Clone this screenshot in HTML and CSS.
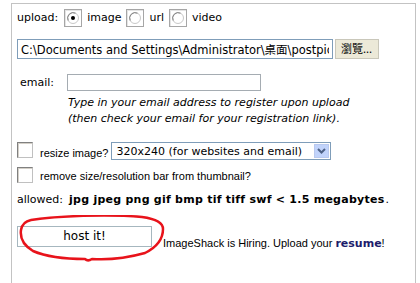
FILE: index.html
```html
<!DOCTYPE html>
<html>
<head>
<meta charset="utf-8">
<title>ImageShack upload</title>
<link rel="stylesheet" href="styles.css">
</head>
<body>
<div id="upload_box">
	<div class="row row_type">
		<span class="label">upload:</span>
		<span class="radio_box"><svg width="18" height="18" viewBox="0 0 18 18"><circle cx="9" cy="9" r="5.5" fill="#fff" stroke="#c8c8c8"/><path d="M4.2 11.5 A5.5 5.5 0 0 1 11.5 4.2" fill="none" stroke="#808080"/><circle cx="9" cy="9" r="2" fill="#000"/></svg></span>
		<span class="opt">image</span>
		<span class="radio_box"><svg width="18" height="18" viewBox="0 0 18 18"><circle cx="9" cy="9" r="5.5" fill="#fff" stroke="#c8c8c8"/><path d="M4.2 11.5 A5.5 5.5 0 0 1 11.5 4.2" fill="none" stroke="#808080"/></svg></span>
		<span class="opt">url</span>
		<span class="radio_box"><svg width="18" height="18" viewBox="0 0 18 18"><circle cx="9" cy="9" r="5.5" fill="#fff" stroke="#c8c8c8"/><path d="M4.2 11.5 A5.5 5.5 0 0 1 11.5 4.2" fill="none" stroke="#808080"/></svg></span>
		<span class="opt">video</span>
	</div>
	<div class="row row_file">
		<input class="file_text" type="text" value="C:\Documents and Settings\Administrator\桌面\postpic\upload.jpg" readonly>
		<div class="file_btn">瀏覽...</div>
	</div>
	<div class="row row_email">
		<span class="label email_label">email:</span>
		<div class="email_field"></div>
	</div>
	<p class="hint">Type in your email address to register upon upload<br>(then check your email for your registration link).</p>
	<div class="row row_check">
		<span class="check_box"></span>
		<span class="small">resize image?</span>
		<div class="select">
			<span class="select_text">320x240 (for websites and email)</span>
			<span class="select_arrow"><svg width="9" height="6" viewBox="0 0 9 6"><path d="M1 1 L4.5 4.5 L8 1" fill="none" stroke="#4d6185" stroke-width="2"/></svg></span>
		</div>
	</div>
	<div class="row row_check2">
		<span class="check_box"></span>
		<span class="small">remove size/resolution bar from thumbnail?</span>
	</div>
	<div class="row row_allowed">
		<span>allowed:</span>
		<b>jpg jpeg png gif bmp tif tiff swf &lt; 1.5 megabytes</b><span>.</span>
	</div>
	<div class="row row_submit">
		<div class="host_btn">host it!</div>
		<span class="small hiring">ImageShack is Hiring. Upload your <b>resume</b>!</span>
		<svg class="scribble" width="150" height="48" viewBox="0 0 150 48"><path d="M14 5 C40 1 90 -1 125 2 C140 4 146 8 146 14 C146 24 140 32 128 38 C110 43 90 45 75 44 C72 46 70 46 68 44 C50 44 30 42 16 36 C6 30 3 22 4 15 C5 9 9 6 14 5" fill="none" stroke="#e8131b" stroke-width="2.5" stroke-linejoin="round"/></svg>
	</div>
</div>
</body>
</html>
```
FILE: styles.css
```css
body {margin:0; background:#fff; color:#000; font-family:"DejaVu Sans", Verdana, sans-serif; font-size:11px;}
#upload_box {margin:3px 0 0 11px; width:405px; height:280px; overflow:hidden; border:1px solid #c3c3c3; border-bottom:none; padding:4px 0 0 5px; box-sizing:border-box;}
.row {display:flex; align-items:center;}

.row_type {height:19px;}
.row_type .label {margin-right:6px;}
.radio_box {display:inline-block; width:18px; height:18px; border:1px solid #a6a6a6; box-sizing:border-box; background:#fff; box-shadow:inset 1px 1px 0 #e4e4e4;}
.radio_box svg {display:block; margin:-1px 0 0 -1px;}
.opt {margin:0 5px 0 5px;}

.row_file {margin-top:12px; height:20px;}
.file_text {width:316px; height:20px; margin:0; box-sizing:border-box; border:1px solid #7f9db9; padding:1px 3px; font-size:11.5px; color:#000; font-family:"DejaVu Sans", "Noto Sans CJK TC", sans-serif; outline:none;}
.file_btn {width:44px; height:20px; margin-left:2px; box-sizing:border-box; border:1px solid #c9c7ba; background:#ece9d8; font-family:"Noto Sans CJK TC", sans-serif; font-size:11px; line-height:17px; padding-left:5px; white-space:nowrap;}

.row_email {margin-top:15px; height:17px;}
.email_label {margin-left:3px; width:47px;}
.email_field {width:194px; height:17px; box-sizing:border-box; border:1px solid #a5acb2;}

.hint {margin:4px 0 0 51px; font-style:italic; line-height:16px;}

.check_box {display:inline-block; width:16px; height:16px; box-sizing:border-box; border:1px solid #c0c0c0; border-top-color:#808080; border-left-color:#808080; box-shadow:inset 1px 1px 0 #d4d0c8; background:#fff;}
.small {font-family:"Liberation Sans", Arial, sans-serif; font-size:11px;}
.row_check {margin-top:15px; height:18px;}
.row_check .check_box {align-self:flex-start;}
.row_check .small {align-self:flex-end; margin-left:7px; line-height:13px;}
.select {display:flex; align-items:center; width:220px; height:18px; margin-left:3px; box-sizing:border-box; border:1px solid #7f9db9;}
.select_text {flex:1; padding-left:4px; white-space:nowrap;}
.select_arrow {display:flex; align-items:center; justify-content:center; width:15px; height:14px; margin-right:1px; background:#c1d3fb; border:1px solid #b9c9ef; box-sizing:border-box;}
.row_check2 {margin-top:6px; height:17px;}
.row_check2 .small {align-self:flex-end; margin-left:7px; line-height:13px;}

.row_allowed {margin-top:10px; gap:6px;}
.row_allowed b {margin-right:-5px; letter-spacing:0.25px;}

.row_submit {position:relative; margin-top:20px; align-items:flex-end;}
.host_btn {width:135px; height:21px; box-sizing:border-box; border:1px solid #a6b7bf; background:#fff; text-align:center; font-size:12px; line-height:18px;}
.hiring {margin-left:11px; line-height:13px; margin-bottom:-3px;}
.hiring b {font-family:"DejaVu Sans", Verdana, sans-serif; color:#1c1c6c;}
.scribble {position:absolute; left:0; top:-11px;}
```
